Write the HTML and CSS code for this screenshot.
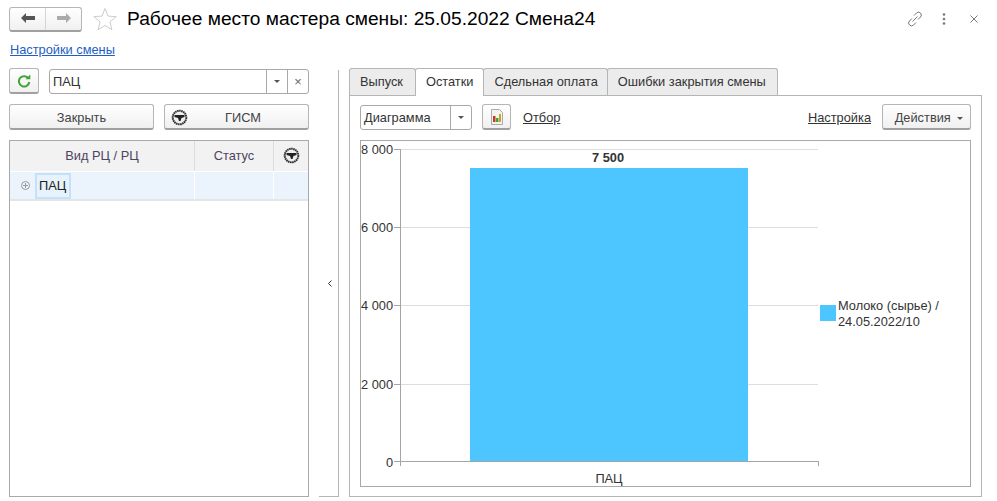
FILE: index.html
```html
<!DOCTYPE html>
<html lang="ru">
<head>
    <meta charset="UTF-8">
    <title>Рабочее место мастера смены</title>
    <link rel="stylesheet" href="styles.css">
</head>
<body>
    <header class="head">
        <div class="nav">
            <button class="nav-btn">
                <svg width="14" height="10" viewBox="0 0 14 10"><path d="M0 5l5-5v3h9v4H5v3z" fill="#555"/></svg>
            </button>
            <button class="nav-btn">
                <svg width="14" height="10" viewBox="0 0 14 10"><path d="M14 5L9 0v3H0v4h9v3z" fill="#aaa"/></svg>
            </button>
        </div>
        <svg class="star" width="24" height="24" viewBox="0 0 24 24"><path d="M12 1.500l3 7.600 8.200.5-6.300 5.200 2 8L12 18.400l-6.900 4.400 2-8L.8 9.600 9 9.100z" fill="#fff" stroke="#ccc"/></svg>
        <h1 class="title">Рабочее место мастера смены: 25.05.2022 Смена24</h1>
        <div class="head-tools">
            <svg width="16" height="16" viewBox="0 0 16 16" fill="none" stroke="#777" stroke-width="1"><path d="M7 4.500l2.500-2.500a2.800 2.800 0 0 1 4 4L11 8.500M9 11.500L6.500 14a2.800 2.800 0 0 1-4-4L5 7.500M5.500 10.500l5-5"/></svg>
            <svg class="dots" width="4" height="12" viewBox="0 0 4 12" fill="#777"><circle cx="2" cy="1.500" r="1.300"/><circle cx="2" cy="6" r="1.300"/><circle cx="2" cy="10.500" r="1.300"/></svg>
            <svg width="8" height="8" viewBox="0 0 8 8" stroke="#777" stroke-width="1"><path d="M.5.500l7 7M7.500.500l-7 7"/></svg>
        </div>
    </header>

    <a class="settings-link" href="#">Настройки смены</a>

    <main class="work">
        <section class="left">
            <div class="filter-row">
                <button class="btn refresh">
                    <svg width="14" height="14" viewBox="0 0 14 14" fill="none"><path d="M11.500 4.500A5.200 5.200 0 1 0 12.300 8" stroke="#3fa535" stroke-width="2"/><path d="M8.500 5.200h4.800V.500z" fill="#3fa535"/></svg>
                </button>
                <div class="combo">
                    <span class="combo-text">ПАЦ</span>
                    <span class="combo-btn"><i class="caret"></i></span>
                    <span class="combo-btn clear">×</span>
                </div>
            </div>
            <div class="button-row">
                <button class="btn wide">Закрыть</button>
                <button class="btn wide gism">
                    <svg width="17" height="17" viewBox="0 0 17 17"><use href="#seal"/></svg>
                    <span>ГИСМ</span>
                </button>
            </div>
            <div class="grid">
                <div class="grid-row grid-top">
                    <div class="cell">Вид РЦ / РЦ</div>
                    <div class="cell">Статус</div>
                    <div class="cell"><svg width="17" height="17" viewBox="0 0 17 17"><use href="#seal"/></svg></div>
                </div>
                <div class="grid-row grid-line">
                    <div class="cell tree">
                        <svg width="9" height="9" viewBox="0 0 9 9" fill="none" stroke="#999"><circle cx="4.500" cy="4.500" r="4"/><path d="M2 4.500h5M4.500 2v5"/></svg>
                        <span class="current">ПАЦ</span>
                    </div>
                    <div class="cell"></div>
                    <div class="cell"></div>
                </div>
            </div>
        </section>

        <div class="splitter">
            <svg width="4" height="7" viewBox="0 0 4 7" fill="none" stroke="#333" stroke-width="1"><path d="M3.500.5l-3 3 3 3"/></svg>
        </div>

        <section class="right">
            <div class="tabs">
                <div class="tab">Выпуск</div>
                <div class="tab active">Остатки</div>
                <div class="tab">Сдельная оплата</div>
                <div class="tab">Ошибки закрытия смены</div>
            </div>
            <div class="tab-body">
                <div class="toolbar">
                    <div class="combo select">
                        <span class="combo-text">Диаграмма</span>
                        <span class="combo-btn"><i class="caret"></i></span>
                    </div>
                    <button class="btn chart-btn">
                        <svg width="14" height="16" viewBox="0 0 14 16"><path d="M1.500.500h8l3 3v12h-11z" fill="#f6f3ee" stroke="#aaa"/><rect x="3" y="7" width="2.500" height="6" fill="#c0392b"/><rect x="6" y="9" width="2.500" height="4" fill="#3fa535"/><rect x="9" y="5" width="2" height="8" fill="#c9a227"/></svg>
                    </button>
                    <a class="tool-link" href="#">Отбор</a>
                    <a class="tool-link push" href="#">Настройка</a>
                    <button class="btn actions">Действия <i class="caret"></i></button>
                </div>
                <div class="chart">
                    <svg class="plot" width="458" height="345" viewBox="0 0 458 345">
                        <g stroke="#ddd">
                            <path d="M39 8.500h418M39 86.500h418M39 164.500h418M39 243.500h418"/>
                        </g>
                        <rect x="109" y="27" width="278" height="293" fill="#4dc5ff"/>
                        <g stroke="#a5a5a5" fill="none">
                            <path d="M39.500 8v317M33 8.500h6M33 86.500h6M33 164.500h6M33 243.500h6M33 320.500h424M457.500 320v5"/>
                        </g>
                        <g class="axis-label" text-anchor="end">
                            <text x="32" y="13">8 000</text>
                            <text x="32" y="91">6 000</text>
                            <text x="32" y="169">4 000</text>
                            <text x="32" y="248">2 000</text>
                            <text x="32" y="326">0</text>
                        </g>
                        <text class="bar-value" x="247" y="21" text-anchor="middle">7 500</text>
                        <text class="axis-label" x="248" y="342" text-anchor="middle">ПАЦ</text>
                    </svg>
                    <div class="legend">
                        <span class="swatch"></span>
                        <span>Молоко (сырье) /<br>24.05.2022/10</span>
                    </div>
                </div>
            </div>
        </section>
    </main>

    <svg class="defs" width="0" height="0">
        <defs>
            <g id="seal">
                <circle cx="8.500" cy="8.500" r="6.800" fill="#eee" stroke="#333" stroke-width="2" stroke-dasharray="1.600 .5"/>
                <path d="M3.500 6h10v2l-3 1-1 3H8L7 9 3.500 8z" fill="#222"/>
            </g>
        </defs>
    </svg>
</body>
</html>
```

FILE: styles.css
```css
* {
    box-sizing: border-box;
}
html, body {
    margin: 0;
    height: 100%;
}
body {
    width: 997px;
    height: 501px;
    overflow: hidden;
    background-color: #fff;
    font-family: "Liberation Sans", Arial, sans-serif;
    font-size: 12.800px;
    color: #333;
}
button {
    font: inherit;
    color: #444;
}

/* header */
.head {
    display: flex;
    align-items: center;
    height: 24px;
    margin: 7px 0 0 9px;
}
.nav {
    display: flex;
    width: 73px;
    height: 25px;
    border: 1px solid #b5b5b5;
    border-bottom: 2px solid #a0a0a0;
    border-radius: 3px;
    background: linear-gradient(#fff, #f0f0f0);
}
.nav-btn {
    flex: 1;
    padding: 0;
    border: 0;
    background: none;
}
.nav-btn + .nav-btn {
    border-left: 1px solid #d5d5d5;
}
.star {
    margin-left: 11px;
}
.title {
    margin: 0 0 0 10px;
    font-size: 19.200px;
    font-weight: normal;
    color: #000;
}
.head-tools {
    display: flex;
    align-items: center;
    gap: 19px;
    margin-left: auto;
    margin-right: 19px;
}
.dots {
    margin-right: 5px;
}
.settings-link {
    display: block;
    margin: 12px 0 0 10px;
    color: #1d5fc4;
    line-height: 14px;
}

/* layout */
.work {
    display: flex;
    height: 429px;
    margin: 11px 0 0 9px;
}
.left {
    display: flex;
    flex-direction: column;
    width: 300px;
}
.filter-row {
    display: flex;
    align-items: flex-end;
    gap: 10px;
}
.btn {
    height: 26px;
    padding: 1px 0 0;
    border: 1px solid #b5b5b5;
    border-bottom: 2px solid #a0a0a0;
    border-radius: 3px;
    background: linear-gradient(#fff, #f0f0f0);
}
.refresh {
    display: flex;
    align-items: center;
    justify-content: center;
    width: 30px;
}
.combo {
    display: flex;
    flex: 1;
    height: 25px;
    border: 1px solid #a9a9a9;
    border-radius: 3px;
    background-color: #fff;
}
.combo-text {
    flex: 1;
    padding-left: 3px;
    line-height: 23px;
}
.combo-btn {
    display: flex;
    align-items: center;
    justify-content: center;
    width: 21px;
    border-left: 1px solid #a9a9a9;
}
.clear {
    color: #666;
}
.caret {
    display: inline-block;
    width: 0;
    height: 0;
    border: 3px solid transparent;
    border-top: 3px solid #555;
    border-bottom: 0;
}
.button-row {
    display: flex;
    gap: 10px;
    margin-top: 10px;
}
.wide {
    flex: none;
    width: 145px;
}
.gism {
    display: flex;
    align-items: center;
    padding-left: 6px;
}
.gism span {
    flex: 1;
    padding-right: 10px;
}

/* tree table */
.grid {
    flex: 1;
    margin-top: 10px;
    border: 1px solid #a9a9a9;
}
.grid-row {
    display: grid;
    grid-template-columns: 185px 79px 1fr;
}
.grid-top {
    height: 31px;
    background-color: #f2f2f2;
    color: #4d4560;
    border-bottom: 1px solid #fff;
}
.grid-top .cell {
    padding-bottom: 2px;
}
.grid-line {
    height: 29px;
    background-color: #ebf4fc;
    border-bottom: 2px solid #e5e5e5;
}
.cell {
    display: flex;
    align-items: center;
    justify-content: center;
    border-right: 1px solid #dcdcdc;
}
.grid-line .cell {
    border-right-color: #fff;
}
.cell:last-child {
    border-right: 0;
}
.cell.tree {
    justify-content: flex-start;
    padding-left: 11px;
}
.current {
    margin-left: 5px;
    padding: 0 3px 0 2px;
    line-height: 22px;
    border: 2px solid #c4e1f9;
    background-color: #e6f2fc;
    color: #222;
}

/* splitter */
.splitter {
    display: flex;
    align-items: center;
    justify-content: center;
    width: 20px;
    height: 427px;
    margin: 2px 0 0 10px;
    padding-left: 2px;
    border-right: 1px solid #b5b5b5;
    border-bottom: 1px solid #b5b5b5;
}

/* right side */
.right {
    display: flex;
    flex-direction: column;
    width: 633px;
    margin-left: 10px;
}
.tabs {
    display: flex;
    height: 27px;
}
.tab {
    height: 27px;
    margin-right: -1px;
    padding: 0 10px;
    border: 1px solid #b5b5b5;
    border-bottom: 0;
    border-radius: 3px 3px 0 0;
    background-color: #ececec;
    line-height: 25px;
}
.tab:first-child {
    padding-right: 12px;
}
.tab:nth-child(3) {
    padding-right: 9px;
}
.tab:last-child {
    padding-right: 11px;
}
.tab.active {
    position: relative;
    z-index: 1;
    height: 28px;
    background-color: #fff;
}
.tab-body {
    flex: 1;
    padding: 8px 10px;
    border: 1px solid #b5b5b5;
}
.toolbar {
    display: flex;
    align-items: center;
    height: 26px;
}
.select {
    flex: none;
    width: 112px;
}
.chart-btn {
    display: flex;
    align-items: center;
    justify-content: center;
    width: 29px;
    margin-left: 10px;
}
.tool-link {
    margin-top: 1px;
    color: #333;
}
.toolbar .tool-link:first-of-type {
    margin-left: 12px;
}
.push {
    margin-left: auto;
}
.actions {
    width: 89px;
    margin-left: 11px;
    padding-left: 5px;
}
.actions .caret {
    margin-left: 3px;
    vertical-align: 2px;
}

/* chart */
.chart {
    display: flex;
    height: 347px;
    margin-top: 10px;
    border: 1px solid #a9a9a9;
}
.plot {
    flex: none;
}
.axis-label {
    font-size: 12.800px;
    fill: #333;
}
.bar-value {
    font-size: 12.800px;
    font-weight: bold;
    fill: #333;
}
.legend {
    display: flex;
    gap: 2px;
    margin: 157px 0 0 1px;
    line-height: 16px;
}
.swatch {
    width: 16px;
    height: 16px;
    margin-top: 7px;
    background-color: #4dc5ff;
}
.defs {
    position: absolute;
}
```
